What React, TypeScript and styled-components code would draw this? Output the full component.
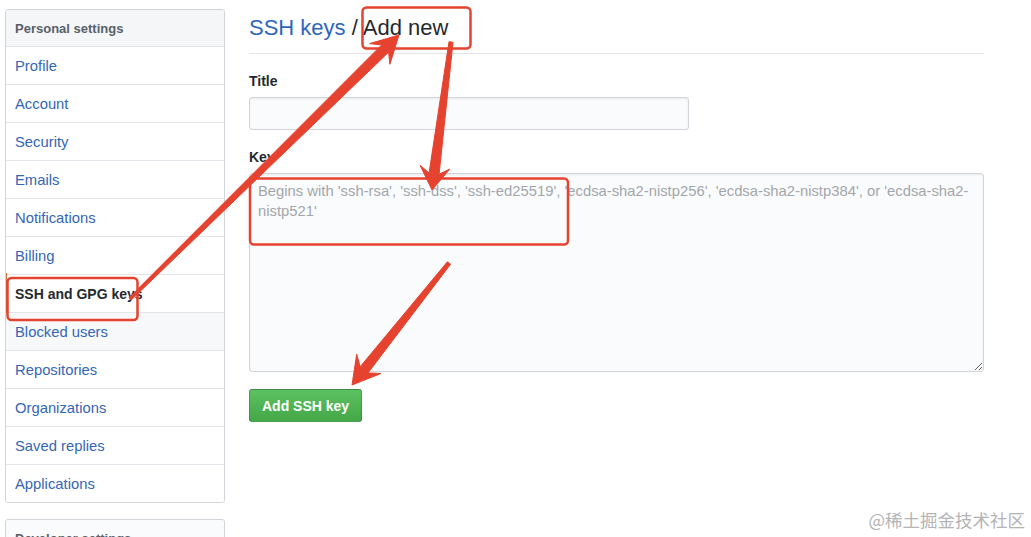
import styled, { createGlobalStyle } from 'styled-components'

const GlobalStyle = createGlobalStyle`
  html, body {
    margin: 0;
    padding: 0;
    background: #fff;
  }
  body {
    font-family: "Liberation Sans", Arial, sans-serif;
    font-size: 14px;
    color: #24292e;
  }
`

const Page = styled.div`
  position: relative;
  height: 537px;
  overflow: hidden;
  display: flex;
  align-items: flex-start;
  gap: 24px;
  padding-left: 5px;
`

const Sidebar = styled.nav`
  width: 220px;
  flex: none;
  margin-top: 9px;
  display: flex;
  flex-direction: column;
  gap: 16px;
`

const Menu = styled.div`
  flex: none;
  border: 1px solid #d1d5da;
  border-radius: 3px;
  overflow: hidden;
`

const MenuHeading = styled.div<{ $tint?: string }>`
  height: 36px;
  display: flex;
  align-items: center;
  padding-left: 9px;
  background: ${p => p.$tint || '#f4f6f8'};
  border-bottom: 1px solid #e1e4e8;
  font-size: 13px;
  font-weight: bold;
  color: #586069;
`

const MenuItem = styled.a<{ $selected?: boolean; $hover?: boolean }>`
  position: relative;
  height: 37px;
  display: flex;
  align-items: center;
  padding-left: 9px;
  border-bottom: 1px solid #e1e4e8;
  font-size: ${p => (p.$selected ? '14px' : '14.8px')};
  text-decoration: none;
  color: ${p => (p.$selected ? '#24292e' : '#3566b5')};
  font-weight: ${p => (p.$selected ? 'bold' : 'normal')};
  background: ${p => (p.$hover ? '#f7f8fa' : '#fff')};

  &:last-child {
    border-bottom: none;
  }

  &::before {
    content: '';
    display: ${p => (p.$selected ? 'block' : 'none')};
    position: absolute;
    left: -1px;
    top: -2px;
    bottom: -1px;
    width: 2px;
    background: #c87540;
  }
`

const Main = styled.main`
  width: 735px;
  flex: none;
`

const Subhead = styled.div`
  padding: 14px 0 11px;
  border-bottom: 1px solid #e1e4e8;
`

const Heading = styled.h2`
  margin: 0;
  font-size: 22px;
  line-height: 28px;
  font-weight: normal;
  color: #24292e;
`

const Crumb = styled.a`
  color: #2f66bc;
  text-decoration: none;
`

const FormGroup = styled.div<{ $top: number }>`
  margin-top: ${p => p.$top}px;
`

const Label = styled.label`
  display: block;
  font-size: 14px;
  line-height: 20px;
  font-weight: bold;
  margin-bottom: 6px;
`

const TextInput = styled.input`
  box-sizing: border-box;
  display: block;
  width: 440px;
  height: 33px;
  padding: 6px 8px;
  background: #fafbfc;
  border: 1px solid #d1d5da;
  border-radius: 3px;
  box-shadow: inset 0 1px 2px rgba(27, 31, 35, 0.075);
  font: inherit;
  outline: none;
`

const KeyArea = styled.textarea`
  box-sizing: border-box;
  display: block;
  width: 735px;
  height: 199px;
  padding: 7px 8px;
  background: #fafbfc;
  border: 1px solid #d1d5da;
  border-radius: 3px;
  box-shadow: inset 0 1px 2px rgba(27, 31, 35, 0.075);
  font-family: "Liberation Sans", Arial, sans-serif;
  font-size: 14.8px;
  line-height: 20px;
  resize: vertical;
  outline: none;

  &::placeholder {
    color: #a3a7ab;
  }
`

const Submit = styled.button`
  margin-top: 17px;
  height: 33px;
  padding: 0 12px;
  border: 1px solid rgba(27, 31, 35, 0.2);
  border-radius: 3px;
  background: linear-gradient(#5cc160, #44a748);
  color: #fff;
  font-family: "Liberation Sans", Arial, sans-serif;
  font-size: 14px;
  font-weight: bold;
`

const Overlay = styled.svg`
  position: absolute;
  left: 0;
  top: 0;
  pointer-events: none;
`

const Watermark = styled.div`
  position: absolute;
  right: 6px;
  bottom: 5px;
  font-family: "Noto Sans CJK SC", "Liberation Sans", sans-serif;
  font-size: 17.5px;
  color: #b4b4b4;
  text-shadow: 0 0 2px #fff;
`

type Pt = [number, number]

function arrow(tail: Pt, tip: Pt, tailW: number, neckW: number, headLen: number, headW: number) {
  const dx = tip[0] - tail[0]
  const dy = tip[1] - tail[1]
  const len = Math.hypot(dx, dy)
  const ux = dx / len
  const uy = dy / len
  const nx = -uy
  const ny = ux
  const at = (d: number, w: number): Pt => [tail[0] + ux * d + nx * w, tail[1] + uy * d + ny * w]
  const wing = len - headLen
  const neck = len - headLen * 0.72
  const pts: Pt[] = [
    at(0, tailW / 2),
    at(neck, neckW / 2),
    at(wing, headW / 2),
    tip,
    at(wing, -headW / 2),
    at(neck, -neckW / 2),
    at(0, -tailW / 2)
  ]
  return pts.map(p => `${p[0].toFixed(1)},${p[1].toFixed(1)}`).join(' ')
}

const menu = [
  'Profile',
  'Account',
  'Security',
  'Emails',
  'Notifications',
  'Billing',
  'SSH and GPG keys',
  'Blocked users',
  'Repositories',
  'Organizations',
  'Saved replies',
  'Applications'
]

const RED = '#e5432f'

function App () {
  return (
    <Page>
      <GlobalStyle />
      <Sidebar>
        <Menu>
          <MenuHeading>Personal settings</MenuHeading>
          {menu.map(name => (
            <MenuItem
              key={name}
              href='#'
              $selected={name === 'SSH and GPG keys'}
              $hover={name === 'Blocked users'}
            >
              {name}
            </MenuItem>
          ))}
        </Menu>
        <Menu>
          <MenuHeading $tint='#fafbfc'>Developer settings</MenuHeading>
        </Menu>
      </Sidebar>

      <Main>
        <Subhead>
          <Heading>
            <Crumb href='#'>SSH keys</Crumb> / Add new
          </Heading>
        </Subhead>
        <FormGroup $top={17}>
          <Label>Title</Label>
          <TextInput type='text' />
        </FormGroup>
        <FormGroup $top={17}>
          <Label>Key</Label>
          <KeyArea placeholder="Begins with 'ssh-rsa', 'ssh-dss', 'ssh-ed25519', 'ecdsa-sha2-nistp256', 'ecdsa-sha2-nistp384', or 'ecdsa-sha2-nistp521'" />
        </FormGroup>
        <Submit type='button'>Add SSH key</Submit>
      </Main>

      <Overlay width='1031' height='537' viewBox='0 0 1031 537'>
        <g fill='none' stroke={RED} strokeWidth='2.5'>
          <rect x='362.5' y='7.5' width='108' height='41' rx='4' />
          <rect x='7.5' y='278' width='130' height='42' rx='4' />
          <rect x='250' y='178.5' width='318' height='66' rx='4' />
        </g>
        <g fill={RED} stroke={RED} strokeWidth='1' strokeLinejoin='round'>
          <polygon points={arrow([130, 299], [399, 35], 3, 10, 27, 29)} />
          <polygon points={arrow([451, 42], [432, 190], 4, 10, 23, 30)} />
          <polygon points={arrow([449, 263], [352, 385], 4, 10, 27, 31)} />
        </g>
      </Overlay>
      <Watermark>@稀土掘金技术社区</Watermark>
    </Page>
  )
}

export default App
